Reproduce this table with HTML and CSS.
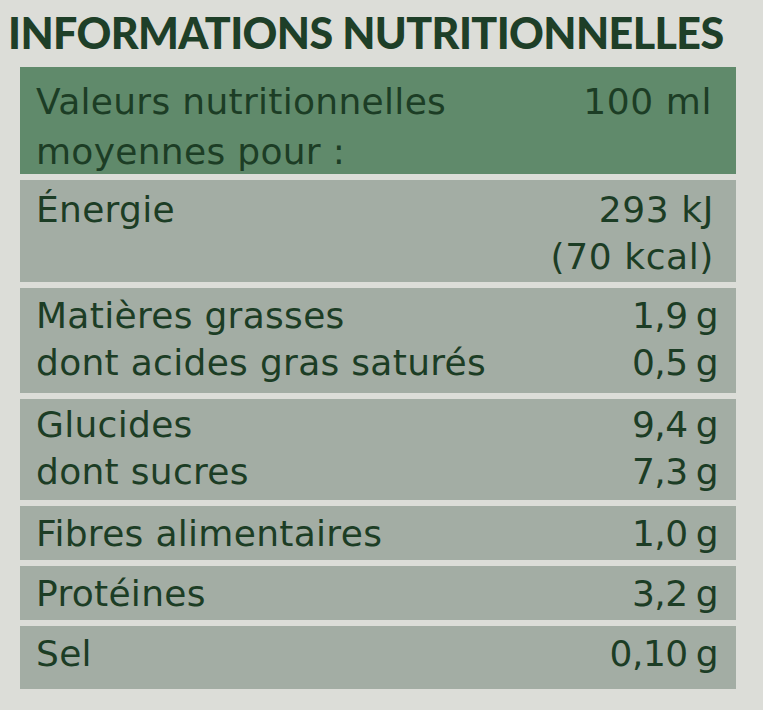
FILE: index.html
```html
<!DOCTYPE html>
<html lang="fr">
<head>
<meta charset="utf-8">
<title>Informations nutritionnelles</title>
<link rel="stylesheet" href="styles.css">
</head>
<body>
<div class="page">
  <h1 class="title">INFORMATIONS NUTRITIONNELLES</h1>
  <div class="table">
    <div class="row head">
      <div class="line"><span>Valeurs nutritionnelles</span><span class="val wide">100 ml</span></div>
      <div class="line"><span>moyennes pour :</span><span></span></div>
    </div>
    <div class="row r-energy">
      <div class="line"><span>Énergie</span><span class="val wide">293 kJ</span></div>
      <div class="line"><span></span><span class="val wide">(70 kcal)</span></div>
    </div>
    <div class="row r-fat">
      <div class="line"><span>Matières grasses</span><span class="val">1,9 g</span></div>
      <div class="line"><span>dont acides gras saturés</span><span class="val">0,5 g</span></div>
    </div>
    <div class="row r-carb">
      <div class="line"><span>Glucides</span><span class="val">9,4 g</span></div>
      <div class="line"><span>dont sucres</span><span class="val">7,3 g</span></div>
    </div>
    <div class="row r-single">
      <div class="line"><span>Fibres alimentaires</span><span class="val">1,0 g</span></div>
    </div>
    <div class="row r-single">
      <div class="line"><span>Protéines</span><span class="val">3,2 g</span></div>
    </div>
    <div class="row r-salt">
      <div class="line"><span>Sel</span><span class="val">0,10 g</span></div>
    </div>
  </div>
</div>
</body>
</html>
```
FILE: styles.css
```css
html, body {
  margin: 0;
  padding: 0;
  background: #dcddd8;
}
.page {
  width: 763px;
  height: 710px;
  overflow: hidden;
  background: #dcddd8;
  font-family: "DejaVu Sans", "Lato", sans-serif;
  color: #1c3d25;
}
.title {
  margin: 0;
  padding: 9px 0 0 8px;
  height: 55px;
  box-sizing: border-box;
  font-family: "Lato", sans-serif;
  font-weight: 900;
  font-size: 43px;
  line-height: 48px;
  letter-spacing: -0.62px;
  color: #1e3f28;
  white-space: nowrap;
}
.table {
  margin: 12px 0 0 20px;
  width: 716px;
  display: flex;
  flex-direction: column;
  gap: 6px;
}
.row {
  background: #a3ada4;
  box-sizing: border-box;
  padding: 4px 18px 0 16px;
  font-size: 36px;
  font-weight: 400;
  line-height: 47px;
}
.line {
  display: flex;
  justify-content: space-between;
  white-space: nowrap;
  letter-spacing: 0.3px;
}
.val {
  text-align: right;
  word-spacing: -3px;
  letter-spacing: -0.5px;
}
.val.wide {
  word-spacing: 0;
  letter-spacing: 0.6px;
}
.head {
  background: #608a6b;
  height: 107px;
  padding-top: 10px;
  line-height: 50px;
  padding-right: 24px;
}
.r-energy { height: 102px; padding-top: 6px; padding-right: 22px; }
.r-fat { height: 105px; }
.r-carb { height: 101px; padding-top: 2px; }
.r-single { height: 54px; }
.r-salt { height: 63px; }
```
